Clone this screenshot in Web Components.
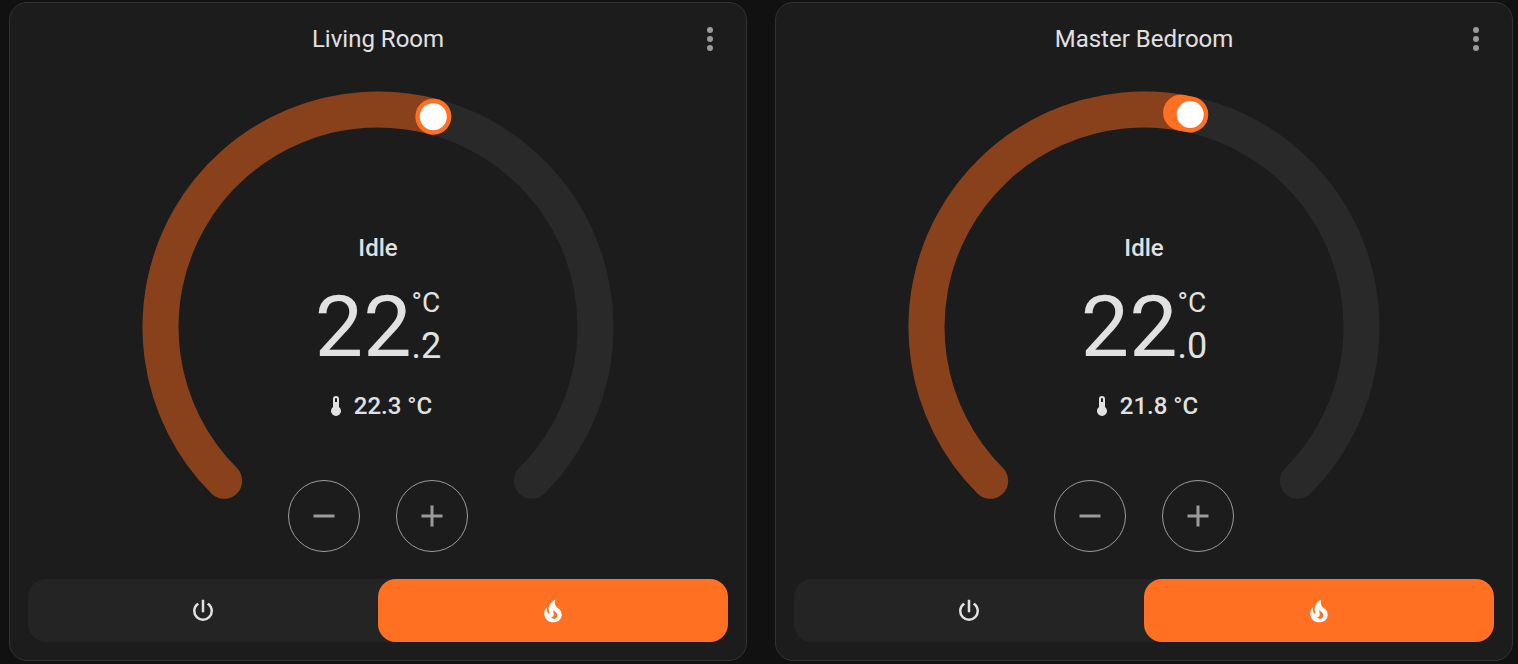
<!DOCTYPE html>
<html lang="en">
<head>
<meta charset="utf-8">
<meta name="viewport" content="width=device-width, initial-scale=1">
<title>Climate</title>
<style>
  body {
    margin: 0;
    background: #111;
    color: #e1e1e1;
    font-family: Roboto, "Noto Sans", sans-serif;
  }
</style>
</head>
<body>
<climate-dashboard>
  <thermostat-card name="Living Room" state="Idle" target="22.2" current="22.3"></thermostat-card>
  <thermostat-card name="Master Bedroom" state="Idle" target="22.0" current="21.8"></thermostat-card>
</climate-dashboard>

<script>
(function() {
  const ICONS = {
    dots: 'M12,16A2,2 0 0,1 14,18A2,2 0 0,1 12,20A2,2 0 0,1 10,18A2,2 0 0,1 12,16M12,10A2,2 0 0,1 14,12A2,2 0 0,1 12,14A2,2 0 0,1 10,12A2,2 0 0,1 12,10M12,4A2,2 0 0,1 14,6A2,2 0 0,1 12,8A2,2 0 0,1 10,6A2,2 0 0,1 12,4Z',
    thermometer: 'M15 13V5A3 3 0 0 0 9 5V13A5 5 0 1 0 15 13M12 4A1 1 0 0 1 13 5V8H11V5A1 1 0 0 1 12 4Z',
    minus: 'M19,13H5V11H19V13Z',
    plus: 'M19,13H13V19H11V13H5V11H11V5H13V11H19V13Z',
    power: 'M16.56,5.44L15.11,6.89C16.84,7.94 18,9.83 18,12A6,6 0 0,1 12,18A6,6 0 0,1 6,12C6,9.83 7.16,7.94 8.88,6.88L7.44,5.44C5.36,6.88 4,9.28 4,12A8,8 0 0,0 12,20A8,8 0 0,0 20,12C20,9.28 18.64,6.88 16.56,5.44M13,3H11V13H13V3Z',
    fire: 'M17.66 11.2C17.43 10.9 17.15 10.64 16.89 10.38C16.22 9.78 15.46 9.35 14.82 8.72C13.33 7.26 13 4.85 13.95 3C13 3.23 12.17 3.75 11.46 4.32C8.87 6.4 7.85 10.07 9.07 13.22C9.11 13.32 9.15 13.42 9.15 13.55C9.15 13.77 9 13.97 8.8 14.05C8.57 14.15 8.33 14.09 8.14 13.93C8.08 13.88 8.04 13.83 8 13.76C6.87 12.33 6.69 10.28 7.45 8.64C5.78 10 4.87 12.3 5 14.47C5.06 14.97 5.12 15.47 5.29 15.97C5.43 16.57 5.7 17.17 6 17.7C7.08 19.43 8.95 20.67 10.96 20.92C13.1 21.19 15.39 20.8 17.03 19.32C18.86 17.66 19.5 15 18.56 12.72L18.43 12.46C18.22 12 17.66 11.2 17.66 11.2M14.5 17.5C14.22 17.74 13.76 18 13.4 18.1C12.28 18.5 11.16 17.94 10.5 17.28C11.69 17 12.4 16.12 12.61 15.23C12.78 14.43 12.46 13.77 12.33 13C12.21 12.26 12.23 11.63 12.5 10.94C12.69 11.32 12.89 11.7 13.13 12C13.9 13 15.11 13.44 15.37 14.8C15.41 14.94 15.43 15.08 15.43 15.23C15.46 16.05 15.1 16.95 14.5 17.5H14.5Z'
  };

  class UiIcon extends HTMLElement {
    connectedCallback() {
      const root = this.attachShadow({ mode: 'open' });
      root.innerHTML = `
        <style>
          :host { display: block; width: var(--icon-size, 24px); height: var(--icon-size, 24px); }
          svg { display: block; width: 100%; height: 100%; fill: currentColor; }
        </style>
        <svg viewBox="0 0 24 24" aria-hidden="true"><path d="${ICONS[this.getAttribute('name')]}"/></svg>
      `;
    }
  }

  // Dial sweeps 270 degrees, with the gap at the bottom
  class TemperatureDial extends HTMLElement {
    connectedCallback() {
      const min = 10;
      const max = 32;
      const r = 145;
      const target = Number(this.getAttribute('target'));
      const current = Number(this.getAttribute('current'));

      const angle = (t) => (t - min) / (max - min) * 270 - 135;
      const point = (deg) => {
        const a = deg * Math.PI / 180;
        return (r * Math.sin(a)).toFixed(2) + ' ' + (-r * Math.cos(a)).toFixed(2);
      };
      const arc = (from, to) =>
        `M ${point(from)} A ${r} ${r} 0 ${to - from > 180 ? 1 : 0} 1 ${point(to)}`;

      const end = angle(target);
      // heating still needed: highlight the part between current and target
      const active = current < target
        ? `<path class="active" d="${arc(angle(current), end)}"/>`
        : `<path class="active" d="${arc(end, end + 0.01)}"/>`;

      const root = this.attachShadow({ mode: 'open' });
      root.innerHTML = `
        <style>
          :host { display: grid; justify-items: center; }
          svg, .content { grid-area: 1 / 1; }
          svg { display: block; width: 100%; max-width: 480px; }
          path { fill: none; stroke-width: 24; stroke-linecap: round; }
          .track { stroke: #292929; }
          .value { stroke: #88411a; }
          .active { stroke: #ff7022; }
          .content {
            display: grid;
            grid-template-rows: 1fr auto;
            justify-items: center;
            width: 100%;
            position: relative;
          }
          .info { grid-area: 1 / 1 / 3 / 2; align-self: center; }
          .controls { grid-area: 2 / 1; padding-bottom: 15px; }
        </style>
        <svg viewBox="-160 -160 320 320" aria-hidden="true">
          <path class="track" d="${arc(-135, 135)}"/>
          <path class="value" d="${arc(-135, end)}"/>
          ${active}
          <circle r="9" fill="#fff" transform="translate(${point(end).replace(' ', ',')})"/>
        </svg>
        <div class="content">
          <div class="info"><slot></slot></div>
          <div class="controls"><slot name="controls"></slot></div>
        </div>
      `;
    }
  }

  class BigNumber extends HTMLElement {
    connectedCallback() {
      const [whole, decimal] = this.getAttribute('value').split('.');
      const root = this.attachShadow({ mode: 'open' });
      root.innerHTML = `
        <style>
          :host { display: flex; font-size: 86px; line-height: 86px; }
          .side { display: flex; flex-direction: column; }
          .unit { font-size: 28px; line-height: 38px; }
          .decimal { font-size: 36px; line-height: 48px; }
        </style>
        <span>${whole}</span>
        <span class="side">
          <span class="unit">°C</span>
          <span class="decimal">.${decimal}</span>
        </span>
      `;
    }
  }

  class RoundButton extends HTMLElement {
    connectedCallback() {
      const root = this.attachShadow({ mode: 'open' });
      root.innerHTML = `
        <style>
          :host { display: block; --icon-size: 36px; }
          button {
            display: grid;
            place-items: center;
            width: 72px;
            height: 72px;
            padding: 0;
            border: 1px solid #9b9b9b;
            border-radius: 50%;
            background: none;
            color: #9b9b9b;
            cursor: pointer;
          }
        </style>
        <button type="button" aria-label="${this.getAttribute('label')}"><slot></slot></button>
      `;
    }
  }

  class ModeSwitch extends HTMLElement {
    connectedCallback() {
      const root = this.attachShadow({ mode: 'open' });
      root.innerHTML = `
        <style>
          :host {
            display: grid;
            grid-template-columns: 1fr 1fr;
            height: 63px;
            border-radius: 18px;
            background: #242424;
            --icon-size: 30px;
          }
          button {
            display: grid;
            place-items: center;
            padding: 0;
            border: 0;
            border-radius: 18px;
            background: none;
            color: #e1e1e1;
            cursor: pointer;
          }
          button[aria-pressed="true"] { background: #ff7022; color: #fff; }
        </style>
        <button type="button" aria-label="Off" aria-pressed="false"><ui-icon name="power"></ui-icon></button>
        <button type="button" aria-label="Heat" aria-pressed="true"><ui-icon name="fire"></ui-icon></button>
      `;
    }
  }

  class ThermostatCard extends HTMLElement {
    connectedCallback() {
      const name = this.getAttribute('name');
      const target = this.getAttribute('target');
      const current = this.getAttribute('current');
      const root = this.attachShadow({ mode: 'open' });
      root.innerHTML = `
        <style>
          :host {
            display: block;
            box-sizing: border-box;
            padding: 0 18px 18px;
            border: 1px solid #333;
            border-radius: 18px;
            background: #1c1c1c;
          }
          header {
            display: grid;
            grid-template-columns: 36px 1fr 36px;
            align-items: center;
            height: 72px;
            margin-bottom: 12px;
          }
          h2 {
            grid-column: 2;
            margin: 0;
            text-align: center;
            font-size: 24px;
            font-weight: 400;
            line-height: 36px;
          }
          .menu {
            --icon-size: 36px;
            padding: 0;
            border: 0;
            background: none;
            color: #9b9b9b;
            cursor: pointer;
          }
          .info {
            display: flex;
            flex-direction: column;
            align-items: center;
            gap: 24px;
            font-size: 24px;
            font-weight: 500;
            line-height: 24px;
          }
          .info p { margin: 0; }
          big-number { font-weight: 400; }
          .current { display: flex; align-items: center; gap: 6px; }
          .buttons { display: flex; gap: 36px; }
          mode-switch { margin-top: 12px; }
        </style>
        <header>
          <h2>${name}</h2>
          <button class="menu" type="button" aria-label="More options"><ui-icon name="dots"></ui-icon></button>
        </header>
        <temperature-dial target="${target}" current="${current}">
          <div class="info">
            <p>${this.getAttribute('state')}</p>
            <big-number value="${target}"></big-number>
            <p class="current"><ui-icon name="thermometer"></ui-icon><span>${current} °C</span></p>
          </div>
          <div class="buttons" slot="controls">
            <round-button label="Decrease temperature"><ui-icon name="minus"></ui-icon></round-button>
            <round-button label="Increase temperature"><ui-icon name="plus"></ui-icon></round-button>
          </div>
        </temperature-dial>
        <mode-switch></mode-switch>
      `;
    }
  }

  class ClimateDashboard extends HTMLElement {
    connectedCallback() {
      const root = this.attachShadow({ mode: 'open' });
      root.innerHTML = `
        <style>
          :host {
            display: grid;
            grid-template-columns: repeat(auto-fit, minmax(480px, 1fr));
            gap: 28px;
            padding: 2px 5px 2px 9px;
          }
        </style>
        <slot></slot>
      `;
    }
  }

  customElements.define('ui-icon', UiIcon);
  customElements.define('temperature-dial', TemperatureDial);
  customElements.define('big-number', BigNumber);
  customElements.define('round-button', RoundButton);
  customElements.define('mode-switch', ModeSwitch);
  customElements.define('thermostat-card', ThermostatCard);
  customElements.define('climate-dashboard', ClimateDashboard);
})();
</script>
</body>
</html>
